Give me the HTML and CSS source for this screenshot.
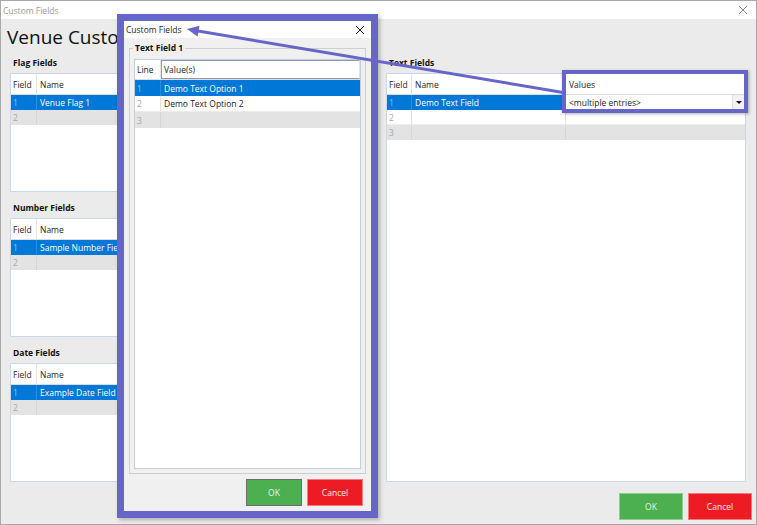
FILE: index.html
```html
<!DOCTYPE html>
<html>
<head>
<meta charset="utf-8">
<title>Custom Fields</title>
<link rel="stylesheet" href="styles.css">
</head>
<body>
<div class="window">
  <div class="titlebar">
    <span class="title">Custom Fields</span>
    <svg class="close-x" width="10" height="10" viewBox="0 0 10 10"><path d="M1 1L9 9M9 1L1 9" stroke="#8a8a8a" stroke-width="1"/></svg>
  </div>
  <div class="body">
    <h1 class="heading">Venue Custom Fields</h1>
    <div class="columns">
      <div class="col">
        <section class="sec">
          <div class="sec-label">Flag Fields</div>
          <div class="grid g2">
            <div class="row hdr"><div class="c num">Field</div><div class="c">Name</div></div>
            <div class="row sel"><div class="c num">1</div><div class="c">Venue Flag 1</div></div>
            <div class="row new"><div class="c num">2</div><div class="c"></div></div>
          </div>
        </section>
        <section class="sec">
          <div class="sec-label">Number Fields</div>
          <div class="grid g2">
            <div class="row hdr"><div class="c num">Field</div><div class="c">Name</div></div>
            <div class="row sel"><div class="c num">1</div><div class="c">Sample Number Field</div></div>
            <div class="row new"><div class="c num">2</div><div class="c"></div></div>
          </div>
        </section>
        <section class="sec">
          <div class="sec-label">Date Fields</div>
          <div class="grid g2">
            <div class="row hdr"><div class="c num">Field</div><div class="c">Name</div></div>
            <div class="row sel"><div class="c num">1</div><div class="c">Example Date Field</div></div>
            <div class="row new"><div class="c num">2</div><div class="c"></div></div>
          </div>
        </section>
      </div>
      <div class="col">
        <section class="sec sec-fill">
          <div class="sec-label">Text Fields</div>
          <div class="grid g3 grid-fill">
            <div class="row hdr"><div class="c num">Field</div><div class="c">Name</div><div class="c">Values</div></div>
            <div class="row sel"><div class="c num">1</div><div class="c">Demo Text Field</div><div class="c combo"><span class="combo-text">&lt;multiple entries&gt;</span><span class="combo-btn"><span class="tri"></span></span></div></div>
            <div class="row plain"><div class="c num">2</div><div class="c"></div><div class="c"></div></div>
            <div class="row new"><div class="c num">3</div><div class="c"></div><div class="c"></div></div>
          </div>
        </section>
      </div>
    </div>
    <div class="footer">
      <button class="btn ok">OK</button>
      <button class="btn cancel">Cancel</button>
    </div>
  </div>
</div>

<div class="dialog">
  <div class="dlg-title">
    <span>Custom Fields</span>
    <svg class="dlg-x" width="10" height="10" viewBox="0 0 10 10"><path d="M1 1L9 9M9 1L1 9" stroke="#222" stroke-width="1"/></svg>
  </div>
  <div class="dlg-body">
    <fieldset class="group">
      <legend>Text Field 1</legend>
      <div class="grid gd grid-fill">
        <div class="row hdr"><div class="c num">Line</div><div class="c focus">Value(s)</div></div>
        <div class="row sel"><div class="c num">1</div><div class="c">Demo Text Option 1</div></div>
        <div class="row plain"><div class="c num">2</div><div class="c">Demo Text Option 2</div></div>
        <div class="row new"><div class="c num">3</div><div class="c"></div></div>
      </div>
    </fieldset>
    <div class="dlg-buttons">
      <button class="btn ok ok-focus">OK</button>
      <button class="btn cancel">Cancel</button>
    </div>
  </div>
</div>

<div class="hl-box"></div>

<svg class="arrow" width="757" height="525" viewBox="0 0 757 525">
  <line x1="198" y1="31" x2="563" y2="92.5" stroke="#6865c8" stroke-width="3"/>
  <polygon points="187,29 199.5,25.8 197.6,36.6" fill="#6865c8"/>
</svg>
</body>
</html>
```
FILE: styles.css
```css
* { box-sizing: border-box; }
html, body { margin: 0; padding: 0; }
body {
  width: 757px;
  height: 525px;
  position: relative;
  overflow: hidden;
  font-family: "Open Sans", "Noto Sans", sans-serif;
  font-size: 8.5px;
  color: #1e1e1e;
  background: #ebebeb;
}
.window {
  width: 757px;
  height: 525px;
  border: 1px solid #a9a9a9;
  display: flex;
  flex-direction: column;
  background: #ebebeb;
}
.titlebar {
  height: 18px;
  background: #ffffff;
  display: flex;
  align-items: center;
  justify-content: space-between;
  padding: 0 8px 0 2px;
  flex: none;
}
.title { color: #9a9a9a; font-size: 8.5px; }
.close-x { display: block; }
.body {
  flex: 1;
  display: flex;
  flex-direction: column;
  padding: 5px 4px 0 9px;
}
.heading {
  margin: 0 0 7px -3px;
  font-size: 19px;
  line-height: 26px;
  font-weight: 400;
  color: #111;
  white-space: nowrap;
}
.columns {
  display: grid;
  grid-template-columns: 366px 360px;
  column-gap: 10px;
  margin-right: 6px;
}
.col { display: flex; flex-direction: column; gap: 10px; }
.sec { display: flex; flex-direction: column; }
.sec-fill { flex: 1; }
.sec-label {
  font-weight: 700;
  line-height: 12px;
  height: 12px;
  margin-bottom: 4px;
  padding-left: 3px;
  color: #111;
}
.grid {
  border: 1px solid #c9d8ea;
  background: #ffffff;
  height: 119px;
  display: flex;
  flex-direction: column;
  overflow: hidden;
}
.grid-fill { flex: 1; height: auto; }
.row { display: grid; height: 15px; flex: none; }
.g2 .row { grid-template-columns: 26px 1fr; }
.g3 .row { grid-template-columns: 25px 154px 1fr; }
.gd .row { grid-template-columns: 26px 1fr; height: 16px; }
.c {
  padding-left: 3px;
  display: flex;
  align-items: center;
  white-space: nowrap;
  overflow: hidden;
  border-right: 1px solid #e2e2e2;
}
.c:last-child { border-right: none; }
.c.num { padding-left: 2px; }
.row.hdr {
  height: 21px;
  border-bottom: 1px solid #dcdcdc;
  background: #ffffff;
  color: #1e1e1e;
}
.gd .row.hdr { height: 20px; }
.row.hdr .c { border-right-color: #e4e4e4; }
.row.sel { background: #0078d7; color: #ffffff; }
.row.sel .c { border-right-color: #2a8ee0; }
.row.sel .c.num { color: #8cbfec; }
.row.plain { background: #ffffff; border-bottom: 1px solid #ececec; }
.row.plain .c.num { color: #a8a8a8; }
.row.new { background: #e3e3e3; }
.row.new .c { border-right-color: #d6d6d6; }
.row.new .c.num { color: #a8a8a8; }
.c.focus {
  border: 1px solid #8c99ae;
  padding-left: 2px;
}
.c.combo {
  background: #ffffff;
  color: #1e1e1e;
  padding-right: 0;
  justify-content: space-between;
}
.combo-btn {
  width: 13px;
  height: 100%;
  border-left: 1px solid #e0e0e0;
  background: #f2f2f2;
  display: flex;
  align-items: center;
  justify-content: center;
}
.tri {
  width: 0; height: 0;
  border-left: 3px solid transparent;
  border-right: 3px solid transparent;
  border-top: 3px solid #111;
}
.footer {
  display: flex;
  justify-content: flex-end;
  gap: 5px;
  margin-top: 11px;
}
.btn {
  width: 64px;
  height: 27px;
  font-family: inherit;
  font-size: 8.5px;
  border: 1px solid;
  padding: 0;
  margin: 0;
}
.btn.ok { background: #4caf50; border-color: #8bcf8b; color: #e6f4e6; }
.btn.cancel { background: #ed1c24; border-color: #f27a7f; color: #fde9ea; }

.dialog {
  position: absolute;
  left: 117px;
  top: 14px;
  width: 261px;
  height: 504px;
  border: 7px solid #6865c8;
  background: #f0f0f0;
  display: flex;
  flex-direction: column;
  box-shadow: 2px 2px 4px rgba(0,0,0,0.25);
}
.dlg-title {
  height: 17px;
  background: #ffffff;
  display: flex;
  align-items: center;
  justify-content: space-between;
  padding: 0 6px 0 2px;
  color: #1e1e1e;
  flex: none;
}
.dlg-x { display: block; }
.dlg-body {
  flex: 1;
  display: flex;
  flex-direction: column;
  padding: 4px 5px 5px 5px;
  min-height: 0;
}
.group {
  flex: 1;
  margin: 0;
  border: 1px solid #cfcfcf;
  padding: 5px 4px 4px 4px;
  display: flex;
  flex-direction: column;
  min-height: 0;
}
.group legend {
  font-weight: 700;
  line-height: 12px;
  padding: 0 2px;
  margin-left: -1px;
  color: #111;
}
.gd { border-color: #c3cfdd; }
.dlg-buttons {
  display: flex;
  justify-content: flex-end;
  gap: 5px;
  margin-top: 5px;
  padding-right: 3px;
  flex: none;
}
.dlg-buttons .btn { width: 56px; }
.btn.ok-focus { border-color: #6d6d6d; }

.hl-box {
  position: absolute;
  left: 562px;
  top: 70px;
  width: 186px;
  height: 43px;
  border: 4px solid #6865c8;
  box-shadow: 1px 1px 3px rgba(0,0,0,0.3);
}
.arrow {
  position: absolute;
  left: 0;
  top: 0;
  pointer-events: none;
}
```
